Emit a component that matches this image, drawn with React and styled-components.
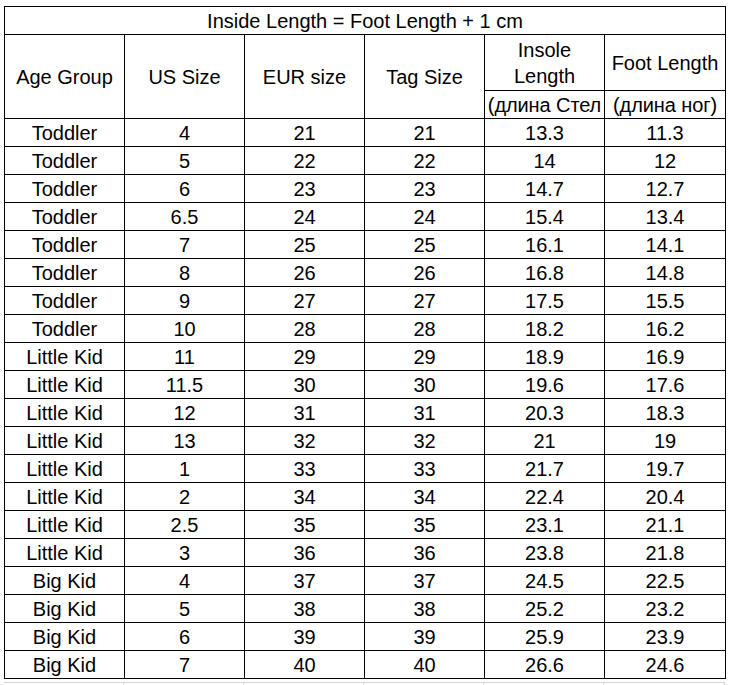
import * as React from "react";
import styled, {createGlobalStyle} from "styled-components";

const GlobalStyle = createGlobalStyle`
  body {
    margin: 0;
    background: #ffffff;
    font-family: "Liberation Sans", Arial, sans-serif;
    color: #000000;
  }
`;

const Page = styled.div`
  padding: 6px 0 0 4px;
`;

const Sheet = styled.div`
  display: grid;
  grid-template-columns: repeat(5, 119px) 120px;
  grid-template-rows: 27px 55px 27px repeat(20, 27px);
  gap: 1px;
  padding: 1px;
  width: max-content;
  background: #000000;
`;

const Cell = styled.div`
  background: #ffffff;
  display: flex;
  flex-direction: column;
  align-items: center;
  justify-content: center;
  text-align: center;
  font-size: 20px;
  line-height: 26px;
  white-space: nowrap;
  overflow: hidden;
  grid-row: ${p => p.$rows ? `span ${p.$rows}` : "auto"};
`;

const Title = styled(Cell)`
  grid-column: 1 / -1;
`;

const Note = styled(Cell)`
  letter-spacing: -0.1px;
`;

const Gridlines = styled.div`
  display: grid;
  grid-template-columns: repeat(5, 119px) 120px;
  gap: 1px;
  margin-top: 3px;
  padding: 1px 1px 0 0;
  width: max-content;
  height: 10px;
  background: #d6d6d6;
`;

const Blank = styled.div`
  background: #ffffff;
`;

const rows = [
  ["Toddler", "4", "21", "21", "13.3", "11.3"],
  ["Toddler", "5", "22", "22", "14", "12"],
  ["Toddler", "6", "23", "23", "14.7", "12.7"],
  ["Toddler", "6.5", "24", "24", "15.4", "13.4"],
  ["Toddler", "7", "25", "25", "16.1", "14.1"],
  ["Toddler", "8", "26", "26", "16.8", "14.8"],
  ["Toddler", "9", "27", "27", "17.5", "15.5"],
  ["Toddler", "10", "28", "28", "18.2", "16.2"],
  ["Little Kid", "11", "29", "29", "18.9", "16.9"],
  ["Little Kid", "11.5", "30", "30", "19.6", "17.6"],
  ["Little Kid", "12", "31", "31", "20.3", "18.3"],
  ["Little Kid", "13", "32", "32", "21", "19"],
  ["Little Kid", "1", "33", "33", "21.7", "19.7"],
  ["Little Kid", "2", "34", "34", "22.4", "20.4"],
  ["Little Kid", "2.5", "35", "35", "23.1", "21.1"],
  ["Little Kid", "3", "36", "36", "23.8", "21.8"],
  ["Big Kid", "4", "37", "37", "24.5", "22.5"],
  ["Big Kid", "5", "38", "38", "25.2", "23.2"],
  ["Big Kid", "6", "39", "39", "25.9", "23.9"],
  ["Big Kid", "7", "40", "40", "26.6", "24.6"],
];

export default function App() {
  return (
    <Page>
      <GlobalStyle/>
      <Sheet>
        <Title>Inside Length = Foot Length + 1 cm</Title>

        <Cell $rows={2}>Age Group</Cell>
        <Cell $rows={2}>US Size</Cell>
        <Cell $rows={2}>EUR size</Cell>
        <Cell $rows={2}>Tag Size</Cell>
        <Cell>
          <span>Insole</span>
          <span>Length</span>
        </Cell>
        <Cell>Foot Length</Cell>
        <Note>(длина Стел</Note>
        <Note>(длина ног)</Note>

        {rows.map((row, i) =>
          row.map((value, j) => <Cell key={i + "-" + j}>{value}</Cell>)
        )}
      </Sheet>
      <Gridlines>
        {[0, 1, 2, 3, 4, 5].map(i => <Blank key={i}/>)}
      </Gridlines>
    </Page>
  );
}
